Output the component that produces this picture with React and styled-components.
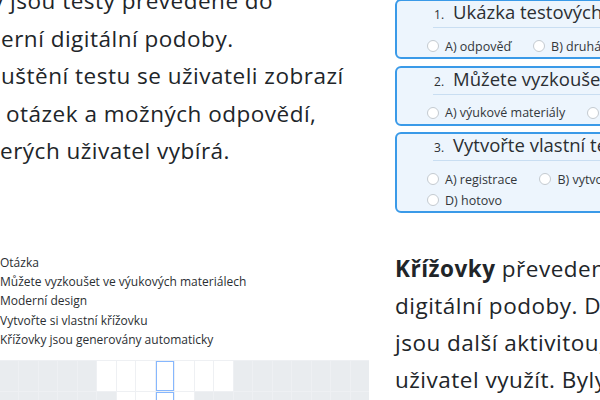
import React from "react";
import styled, { createGlobalStyle } from "styled-components";

const GlobalStyle = createGlobalStyle`
  html, body {
    margin: 0;
    padding: 0;
  }
  body {
    width: 600px;
    height: 400px;
    overflow: hidden;
    background: #fff;
    color: #212529;
    font-family: "Open Sans", "Noto Sans", sans-serif;
  }
`;

const Page = styled.div`
  width: 600px;
  height: 400px;
  overflow: hidden;
`;

const Section = styled.section`
  display: grid;
  grid-template-columns: 370px 1fr;
  column-gap: 25px;
  align-items: start;
  margin-top: ${(p) => p.$top || 0}px;
`;

const Lead = styled.p`
  margin: -18px 0 0;
  font-size: 22.5px;
  letter-spacing: 0.5px;
  line-height: 37.5px;
  white-space: nowrap;
`;

const LeadLine = styled.span`
  display: block;
  margin-left: ${(p) => p.$shift || 0}px;
`;

const CardStack = styled.div`
  display: flex;
  flex-direction: column;
  gap: 6.5px;
  margin-top: -1px;
`;

const Card = styled.div`
  width: 420px;
  box-sizing: border-box;
  border: 2px solid #3a9ae8;
  border-radius: 6px;
  background: #edf5fd;
  padding: 0 20px 1.5px 30px;
`;

const CardTitle = styled.div`
  display: flex;
  align-items: baseline;
  gap: 9px;
  height: 26px;
  padding-left: 7px;
  line-height: 22px;
  color: #2b2f33;
`;

const Num = styled.span`
  font-size: 12px;
`;

const Title = styled.span`
  font-size: 18.5px;
  white-space: nowrap;
`;

const Divider = styled.div`
  height: 1px;
  margin-left: 6px;
  background: #c9def2;
`;

const Options = styled.div`
  display: flex;
  flex-wrap: wrap;
  column-gap: 22px;
  row-gap: 2px;
  padding-top: 8.5px;
`;

const Option = styled.label`
  display: inline-flex;
  align-items: center;
  gap: 6px;
  font-size: 12.5px;
  line-height: 19px;
  color: #33373b;
  white-space: nowrap;
`;

const Radio = styled.span`
  width: 12px;
  height: 12px;
  box-sizing: border-box;
  border-radius: 50%;
  border: 1px solid #c4cad0;
  background: #fff;
`;

const ClueList = styled.ul`
  list-style: none;
  margin: 0;
  padding: 3px 0 0;
  font-size: 12px;
  line-height: 19.2px;
  color: #2b2f33;
`;

const Board = styled.div`
  display: grid;
  grid-template-columns: repeat(19, 1fr);
  grid-auto-rows: 29.7px;
  gap: 1px;
  width: 369px;
  margin-top: 11px;
  background: #eef0f3;
  border-top: 1px solid #eef0f3;
`;

const Cell = styled.div`
  box-sizing: border-box;
  background: ${(p) => (p.$open ? "#fff" : "#e9ecef")};
  border: ${(p) => (p.$active ? "1.5px solid #86b7fe" : "none")};
`;

const Text = styled.p`
  margin: 0;
  font-size: 22.5px;
  letter-spacing: 0.5px;
  line-height: 37px;
  white-space: nowrap;
`;

const questions = [
  {
    title: "Ukázka testových otázek",
    options: ["A) odpověď", "B) druhá odpověď", "C) třetí"],
  },
  {
    title: "Můžete vyzkoušet ve výukových materiálech",
    options: ["A) výukové materiály", "B) testy", "C) hry"],
  },
  {
    title: "Vytvořte vlastní test",
    options: ["A) registrace", "B) vytvoření testu", "C) sdílení", "D) hotovo"],
  },
];

const clues = [
  "Otázka",
  "Můžete vyzkoušet ve výukových materiálech",
  "Moderní design",
  "Vytvořte si vlastní křížovku",
  "Křížovky jsou generovány automaticky",
];

// open cells per row, index 8 is the selected column
const rows = [
  [5, 6, 7, 8, 9, 10, 11],
  [6, 7, 8, 9],
  [7, 8],
];

export default function App() {
  return (
    <Page>
      <GlobalStyle />
      <Section>
        <Lead>
          <LeadLine $shift={-8}>y jsou testy převedené do</LeadLine>
          <LeadLine $shift={1}>erní digitální podoby.</LeadLine>
          <LeadLine $shift={1}>uštění testu se uživateli zobrazí</LeadLine>
          <LeadLine $shift={6}>otázek a možných odpovědí,</LeadLine>
          <LeadLine>erých uživatel vybírá.</LeadLine>
        </Lead>
        <CardStack>
          {questions.map((q, i) => (
            <Card key={q.title}>
              <CardTitle>
                <Num>{i + 1}.</Num>
                <Title>{q.title}</Title>
              </CardTitle>
              <Divider />
              <Options>
                {q.options.map((o) => (
                  <Option key={o}>
                    <Radio />
                    {o}
                  </Option>
                ))}
              </Options>
            </Card>
          ))}
        </CardStack>
      </Section>
      <Section $top={37}>
        <div>
          <ClueList>
            {clues.map((c) => (
              <li key={c}>{c}</li>
            ))}
          </ClueList>
          <Board>
            {rows.map((open, r) =>
              Array.from({ length: 19 }, (_, c) => (
                <Cell
                  key={`${r}-${c}`}
                  $open={open.includes(c)}
                  $active={c === 8}
                />
              ))
            )}
          </Board>
        </div>
        <Text>
          <b>Křížovky</b> převedené do moderní
          <br />
          digitální podoby. Doplňovačky
          <br />
          jsou další aktivitou, kterou může
          <br />
          uživatel využít. Byly vytvořeny
        </Text>
      </Section>
    </Page>
  );
}
